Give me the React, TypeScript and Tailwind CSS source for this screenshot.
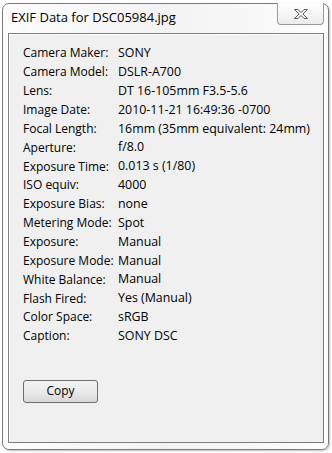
const rows: [string, string][] = [
  ["Camera Maker:", "SONY"],
  ["Camera Model:", "DSLR-A700"],
  ["Lens:", "DT 16-105mm F3.5-5.6"],
  ["Image Date:", "2010-11-21 16:49:36 -0700"],
  ["Focal Length:", "16mm (35mm equivalent: 24mm)"],
  ["Aperture:", "f/8.0"],
  ["Exposure Time:", "0.013 s (1/80)"],
  ["ISO equiv:", "4000"],
  ["Exposure Bias:", "none"],
  ["Metering Mode:", "Spot"],
  ["Exposure:", "Manual"],
  ["Exposure Mode:", "Manual"],
  ["White Balance:", "Manual"],
  ["Flash Fired:", "Yes (Manual)"],
  ["Color Space:", "sRGB"],
  ["Caption:", "SONY DSC"],
];

function CloseGlyph() {
  return (
    <svg width="16" height="12" viewBox="0 0 16 12">
      <path
        d="M1.5 1.5 H5 L8 4.5 L11 1.5 H14.5 L10 6 L14.5 10.5 H11 L8 7.5 L5 10.5 H1.5 L6 6 Z"
        fill="#eeeeee"
        stroke="#606060"
        strokeWidth="1"
        strokeLinejoin="round"
      />
    </svg>
  );
}

export default function App() {
  return (
    <div className="w-[332px] h-[453px] bg-white pt-[3px] pl-[2px]" style={{ fontFamily: '"Open Sans", sans-serif' }}>
      <div className="w-[327px] h-[447px] border border-[#7a7a7a] rounded-[7px] bg-gradient-to-r from-[#fdfdfd] via-[#f3f3f3] to-[#fdfdfd] flex flex-col shadow-[1px_1px_2px_rgba(0,0,0,0.25)]">
        {/* Title bar */}
        <div className="h-[29px] flex items-start relative">
          <span className="ml-[8px] mt-[5px] text-[13px] text-black leading-[16px]">EXIF Data for DSC05984.jpg</span>
          <div className="absolute right-[4px] top-[-1px] w-[47px] h-[22px] border border-[#9a9a9a] border-t-0 rounded-b-[4px] bg-gradient-to-b from-white to-[#ececec] flex items-center justify-center">
            <CloseGlyph />
          </div>
        </div>

        {/* Client area */}
        <div className="ml-[5px] mr-[4px] h-[410px] border border-[#7d7d7d] bg-[#f0f0f0] pl-[14px] pt-[10px] flex flex-col shadow-[inset_1px_1px_0_#ffffff]">
          {rows.map(([label, value]) => (
            <div key={label} className="flex h-[18.87px] items-center text-[12px] text-black">
              <span className="w-[95px] shrink-0">{label}</span>
              <span className="text-[12.4px]">{value}</span>
            </div>
          ))}
          <button className="mt-[34px] w-[75px] h-[23px] border border-[#707070] rounded-[3px] bg-gradient-to-b from-[#f2f2f2] via-[#ebebeb] to-[#d8d8d8] text-[12px] text-black flex items-center justify-center">
            Copy
          </button>
        </div>
      </div>
    </div>
  );
}
